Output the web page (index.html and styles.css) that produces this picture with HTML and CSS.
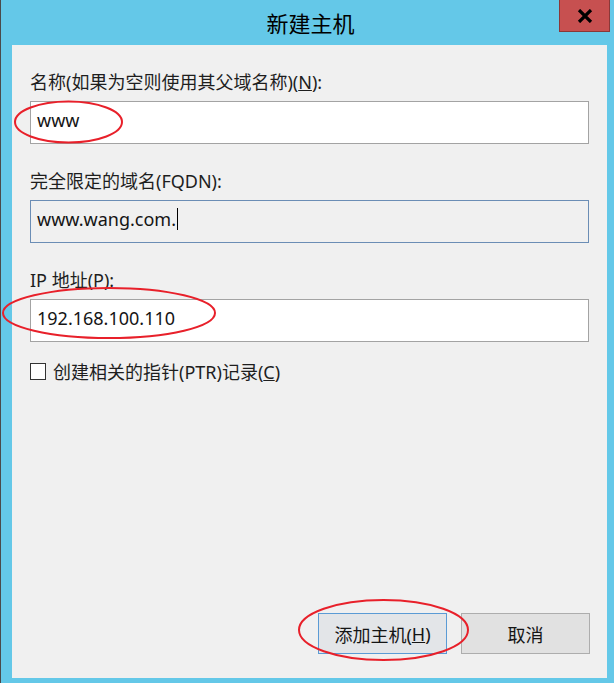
FILE: index.html
```html
<!DOCTYPE html>
<html lang="zh-CN">
<head>
<meta charset="utf-8">
<title>新建主机</title>
<link rel="stylesheet" href="styles.css">
</head>
<body>
<div class="window">
  <div class="titlebar">
    <div class="title">新建主机</div>
    <div class="close">
      <svg width="16" height="14" viewBox="0 0 16 14"><path d="M2 1 L14 13 M14 1 L2 13" stroke="#000" stroke-width="3.2" fill="none"/></svg>
    </div>
  </div>
  <div class="panel">
    <div class="field">
      <div class="label">名称(如果为空则使用其父域名称)(<u>N</u>):</div>
      <div class="input">www</div>
    </div>
    <div class="field">
      <div class="label">完全限定的域名(FQDN):</div>
      <div class="input readonly">www.wang.com.<span class="caret"></span></div>
    </div>
    <div class="field">
      <div class="label">IP 地址(<u>P</u>):</div>
      <div class="input">192.168.100.110</div>
    </div>
    <div class="check-row">
      <span class="checkbox"></span>
      <span class="check-label">创建相关的指针(PTR)记录(<u>C</u>)</span>
    </div>
    <div class="buttons">
      <div class="btn default">添加主机(<u>H</u>)</div>
      <div class="btn">取消</div>
    </div>
  </div>
  <svg class="marks" width="614" height="683" viewBox="0 0 614 683">
    <ellipse cx="68.5" cy="122" rx="53.5" ry="20.5" fill="none" stroke="#e8202a" stroke-width="2"/>
    <ellipse cx="109" cy="313" rx="106" ry="25" fill="none" stroke="#e8202a" stroke-width="2"/>
    <ellipse cx="383.5" cy="630" rx="84.5" ry="30" fill="none" stroke="#e8202a" stroke-width="2"/>
  </svg>
</div>
</body>
</html>
```
FILE: styles.css
```css
* { box-sizing: border-box; }
html, body { margin: 0; padding: 0; }
body {
  font-family: "Noto Sans", "Noto Sans CJK SC", sans-serif;
  background: #64c8e8;
}
.window {
  position: relative;
  width: 614px;
  height: 683px;
  background: #64c8e8;
  border-left: 1px solid #4a4a4a;
  display: flex;
  flex-direction: column;
}
.titlebar {
  height: 45px;
  display: flex;
  justify-content: center;
  align-items: flex-start;
}
.title {
  font-family: "Noto Sans CJK SC", sans-serif;
  font-size: 22px;
  line-height: 28px;
  margin-top: 8px;
  margin-left: 6px;
  color: #000;
}
.close {
  position: absolute;
  left: 558px;
  top: 0;
  width: 51px;
  height: 32px;
  background: #c75050;
  border: 1px solid #8a3838;
  border-top: none;
  display: flex;
  align-items: center;
  justify-content: center;
}
.panel {
  flex: 1;
  margin: 0 7px 5px 11px;
  background: #f0f0f0;
  padding: 27px 18px 24px 18px;
  display: flex;
  flex-direction: column;
  color: #1e1e1e;
  font-size: 18px;
}
.field { margin-bottom: 27px; }
.label {
  line-height: 20px;
  height: 20px;
  margin-bottom: 9px;
  white-space: nowrap;
}
.input {
  height: 43px;
  border: 1px solid #a3a3a3;
  background: #fff;
  padding: 0 6px 6px 6px;
  line-height: 24px;
  font-size: 18px;
  color: #151515;
  display: flex;
  align-items: center;
}
.input.readonly {
  background: #f0f0f0;
  border-color: #6b8db5;
}
.caret {
  display: inline-block;
  width: 1px;
  height: 22px;
  background: #000;
  margin-left: 1px;
}
.field:nth-child(3) { margin-bottom: 19px; }
.check-row {
  display: flex;
  align-items: center;
  height: 20px;
  gap: 7px;
}
.checkbox {
  width: 16px;
  height: 17px;
  border: 1px solid #333;
  background: #fff;
}
.buttons {
  margin-top: auto;
  display: flex;
  justify-content: flex-end;
  gap: 14px;
  margin-right: -1px;
}
.btn {
  width: 129px;
  height: 41px;
  background: #e1e1e1;
  border: 1px solid #adadad;
  display: flex;
  align-items: center;
  justify-content: center;
  font-size: 18px;
  color: #151515;
}
.btn.default {
  border-color: #5b9bd5;
  background: #e3e5e8;
}
.marks {
  position: absolute;
  left: -1px;
  top: 0;
  pointer-events: none;
}
```
